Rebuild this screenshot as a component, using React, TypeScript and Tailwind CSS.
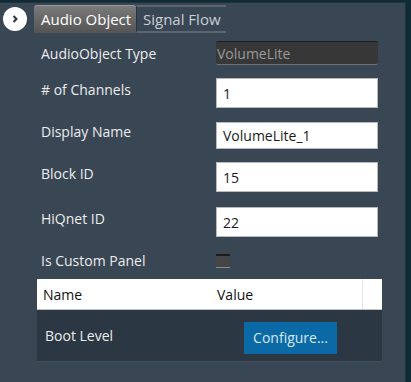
import React from 'react';

const font = { fontFamily: '"Open Sans", "Noto Sans", sans-serif' };

const Field = ({ label, value, className, h = 'h-[30px]' }: { label: string; value: string; className: string; h?: string }) => (
  <div className={`flex items-center ${className}`}>
    <span className="w-[175px] pb-[7px] text-[14px] text-[#ececec]">{label}</span>
    <div className={`w-[162px] ${h} bg-white border border-[#b9b9b9] flex items-center pl-[6px] text-[14px] text-[#1a1a1a]`}>
      {value}
    </div>
  </div>
);

export default function App() {
  return (
    <div className="w-[411px] h-[382px] bg-[#0f2b35] pt-[2px] flex" style={font}>
      <div className="w-[406px] h-full bg-[#394654] border-t border-r border-[#22313c] flex flex-col">
        {/* tab strip */}
        <div className="flex items-center h-[32px]">
          <button className="ml-[3px] w-[24px] h-[24px] rounded-full bg-white flex items-center justify-center">
            <svg width="10" height="10" viewBox="0 0 10 10">
              <path d="M3.5 2 L6.5 5 L3.5 8" fill="none" stroke="#2a3440" strokeWidth="2" />
            </svg>
          </button>
          <div className="ml-[7px] flex h-[28px]">
            <div className="w-[102px] h-full rounded-t-[3px] bg-gradient-to-b from-[#7a7a7a] to-[#545454] border-t border-[#9a9a9a] flex items-center pl-[7px] text-[15px] text-white">
              Audio Object
            </div>
            <div className="w-[90px] h-full border-t-2 border-b-2 border-[#5b6670] border-l border-l-[#2a3440] flex items-center pl-[6px] text-[15px] text-[#c9ced3]">
              Signal Flow
            </div>
          </div>
        </div>

        {/* properties */}
        <div className="pl-[41px] flex flex-col">
          <div className="flex items-center mt-[6px] h-[24px]">
            <span className="w-[175px] text-[14px] text-[#ececec]">AudioObject Type</span>
            <div className="w-[162px] h-[24px] bg-[#373737] border-t border-t-[#1e1e1e] border-b border-b-[#707070] rounded-[2px] flex items-center pl-[1px] text-[14px] text-[#9a9a9a]">
              VolumeLite
            </div>
          </div>
          <Field label="# of Channels" value="1" className="mt-[13px]" />
          <Field label="Display Name" value="VolumeLite_1" className="mt-[13px]" h="h-[27px]" />
          <Field label="Block ID" value="15" className="mt-[13px]" />
          <Field label="HiQnet ID" value="22" className="mt-[15px]" />
          <div className="flex items-center mt-[17px] h-[14px]">
            <span className="w-[175px] text-[14px] leading-[14px] text-[#ececec]">Is Custom Panel</span>
            <div className="w-[14px] h-[14px] bg-[#454545] border-t-2 border-t-[#1c1c1c] border-b border-b-[#8a8a8a]" />
          </div>
        </div>

        {/* table */}
        <div className="ml-[37px] mt-[11px] w-[345px] flex flex-col">
          <div className="h-[31px] bg-white border-b border-[#c4c4c4] flex items-center text-[14px] text-[#111]">
            <span className="w-[180px] pl-[6px]">Name</span>
            <span className="w-[145px]">Value</span>
            <span className="h-full border-l border-[#e6e6e6]" />
          </div>
          <div className="h-[52px] bg-[#2b3743] border-b border-[#44505c] flex items-center text-[14px] text-[#ececec]">
            <span className="w-[207px] pl-[8px]">Boot Level</span>
            <button className="w-[93px] h-[32px] mt-[4px] bg-[#0b6aa6] text-[#d7e6f1] text-[14px]">Configure...</button>
          </div>
        </div>
      </div>
    </div>
  );
}
